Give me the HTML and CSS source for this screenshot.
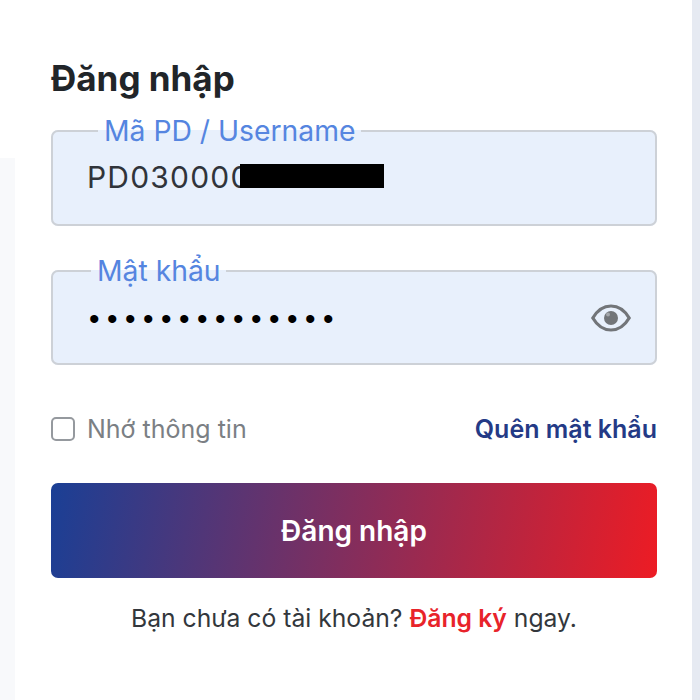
FILE: index.html
```html
<!DOCTYPE html>
<html lang="vi">
<head>
<meta charset="utf-8">
<title>Đăng nhập</title>
<link rel="stylesheet" href="styles.css">
</head>
<body>
<div class="page">
  <div class="side-left"></div>
  <main class="card">
    <h1 class="title">Đăng nhập</h1>
    <fieldset class="field field-user">
      <legend class="legend">Mã PD / Username</legend>
      <div class="value">PD030000<span class="redact"></span></div>
    </fieldset>
    <fieldset class="field field-pass">
      <legend class="legend">Mật khẩu</legend>
      <div class="value-row">
        <span class="dots">••••••••••••••</span>
        <svg class="eye" viewBox="0 0 40 28" width="40" height="28" aria-hidden="true">
          <path d="M1.800 14C6.500 6 12.500 2 20 2S33.500 6 38.200 14C33.500 22 27.500 26 20 26S6.500 22 1.800 14Z" fill="none" stroke="#727579" stroke-width="3.200"/>
          <circle cx="20" cy="14" r="7" fill="#727579"/>
          <circle cx="17" cy="10.500" r="2" fill="#a4a7ab"/>
        </svg>
      </div>
    </fieldset>
    <div class="options">
      <label class="remember"><span class="check"></span>Nhớ thông tin</label>
      <a class="forgot">Quên mật khẩu</a>
    </div>
    <button class="submit">Đăng nhập</button>
    <p class="signup">Bạn chưa có tài khoản? <a class="register">Đăng ký</a> ngay.</p>
  </main>
  <div class="side-right"></div>
</div>
</body>
</html>
```
FILE: styles.css
```css
* { box-sizing: border-box; }
html, body { margin: 0; height: 100%; background: #fff; }
body { font-family: Inter, "Liberation Sans", sans-serif; overflow: hidden; }
.page { display: flex; height: 700px; width: 700px; }
.side-left { width: 15px; margin-top: 158px; background: #f8f9fb; flex: none; }
.side-right { width: 8px; background: #e6eaf2; flex: none; }
.card { flex: 1; padding: 58px 35px 0 36px; min-width: 0; }
.title { margin: 0; font-size: 35px; line-height: 40px; font-weight: 700; color: #212529; }
.field {
  margin: 0; padding: 0; border: 2px solid #cdd1d7; border-radius: 7px;
  background: #e8f0fc; min-width: 0;
}
.field-user { margin-top: 16px; height: 112px; padding-left: 34px; }
.field-pass { margin-top: 28px; height: 111px; padding-left: 36px; padding-right: 24px; }
.legend { font-size: 28.300px; line-height: 34px; color: #5585e0; padding: 0 5px 0 6px; }
.field-user .legend { margin-left: 11px; }
.field-pass .legend { margin-left: 2px; }
.value { font-size: 30px; line-height: 36px; letter-spacing: 1.200px; color: #30343a; position: relative; margin-top: 11px; white-space: nowrap; }
.redact { position: absolute; left: 153px; top: 5px; width: 144px; height: 24px; background: #000; }
.value-row { display: flex; align-items: center; justify-content: space-between; margin-top: 6px; height: 48px; }
.dots { font-family: "Liberation Sans", sans-serif; font-size: 30px; letter-spacing: 7.500px; color: #000; line-height: 1; padding-top: 2px; }
.eye { flex: none; }
.options { display: flex; align-items: center; justify-content: space-between; margin-top: 49px; height: 30px; }
.remember { display: flex; align-items: center; gap: 12px; font-size: 25px; color: #7b7f84; }
.check { width: 24px; height: 24px; border: 2px solid #95999e; border-radius: 5px; background: #fff; }
.forgot { font-size: 25px; font-weight: 600; color: #243a86; }
.submit {
  display: block; width: 100%; height: 95px; margin-top: 39px; border: 0; border-radius: 7px;
  background: linear-gradient(100deg, #1a3f95, #ed1c24); color: #fff;
  font-family: inherit; font-size: 28px; font-weight: 600;
}
.signup { margin: 24px 0 0; text-align: center; font-size: 24.700px; line-height: 32px; color: #33373c; }
.register { color: #e8232a; font-weight: 600; }
```
